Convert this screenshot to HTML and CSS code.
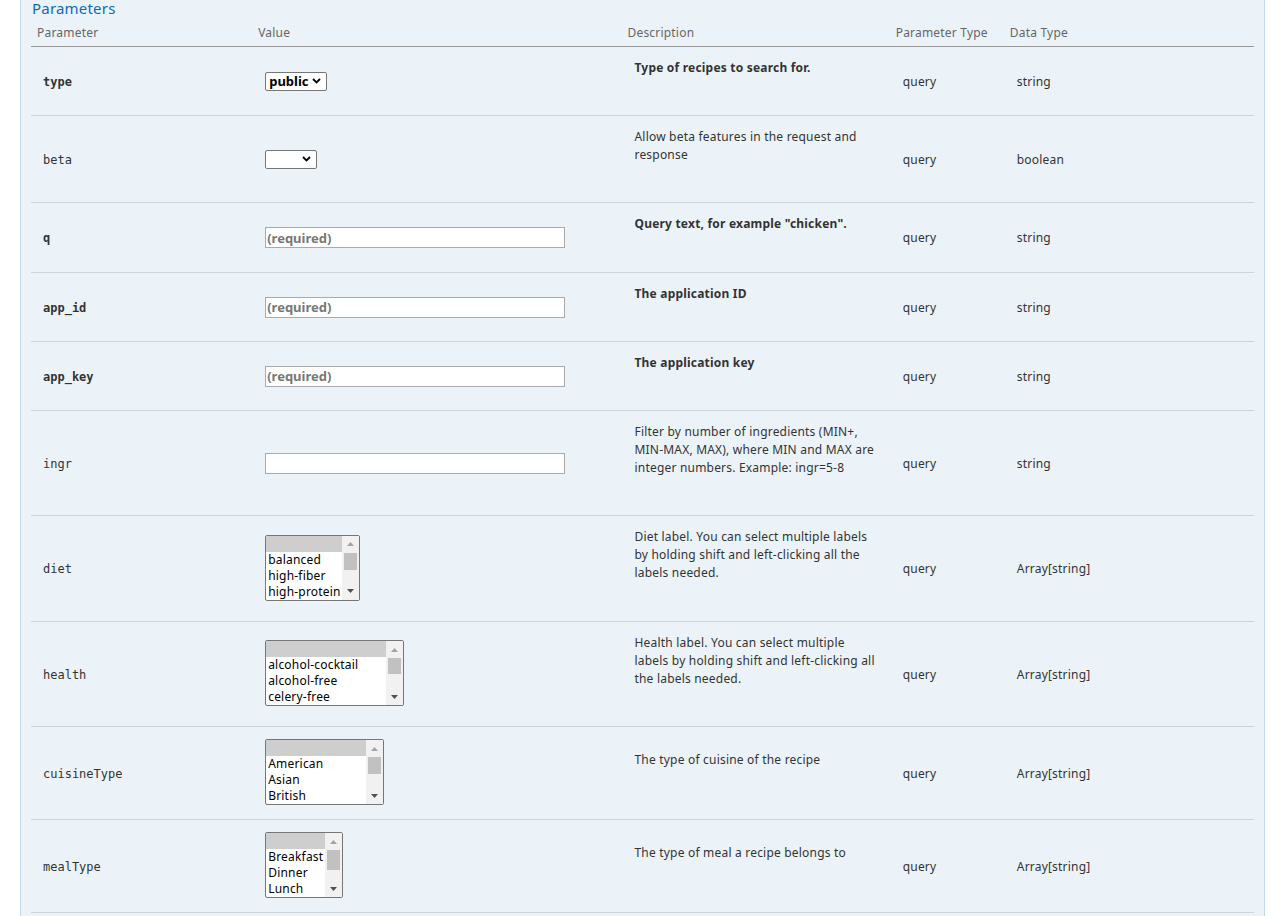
FILE: index.html
```html
<!DOCTYPE html>
<html lang="en">
<head>
  <meta charset="UTF-8">
  <title>Recipe Search - Parameters</title>
  <link rel="stylesheet" href="styles.css">
</head>
<body>
  <div class="operation-content">
    <h4 class="section-title">Parameters</h4>
    <table class="params">
      <colgroup>
        <col class="col-param">
        <col class="col-value">
        <col class="col-desc">
        <col class="col-ptype">
        <col class="col-dtype">
      </colgroup>
      <thead>
        <tr>
          <th>Parameter</th>
          <th>Value</th>
          <th>Description</th>
          <th>Parameter Type</th>
          <th>Data Type</th>
        </tr>
      </thead>
      <tbody>
        <tr>
          <td class="code required">type</td>
          <td class="value">
            <select class="select-single select-type">
              <option selected>public</option>
              <option>user</option>
              <option>any</option>
            </select>
          </td>
          <td class="desc required"><p>Type of recipes to search for.</p></td>
          <td class="cell">query</td>
          <td class="cell">string</td>
        </tr>
        <tr>
          <td class="code">beta</td>
          <td class="value">
            <select class="select-single select-bool">
              <option selected></option>
              <option>true</option>
              <option>false</option>
            </select>
          </td>
          <td class="desc"><p>Allow beta features in the request and response</p></td>
          <td class="cell">query</td>
          <td class="cell">boolean</td>
        </tr>
        <tr class="row-tall">
          <td class="code required">q</td>
          <td class="value"><input class="text-input required" type="text" placeholder="(required)"></td>
          <td class="desc required"><p>Query text, for example "chicken".</p></td>
          <td class="cell">query</td>
          <td class="cell">string</td>
        </tr>
        <tr>
          <td class="code required">app_id</td>
          <td class="value"><input class="text-input required" type="text" placeholder="(required)"></td>
          <td class="desc required"><p>The application ID</p></td>
          <td class="cell">query</td>
          <td class="cell">string</td>
        </tr>
        <tr>
          <td class="code required">app_key</td>
          <td class="value"><input class="text-input required" type="text" placeholder="(required)"></td>
          <td class="desc required"><p>The application key</p></td>
          <td class="cell">query</td>
          <td class="cell">string</td>
        </tr>
        <tr>
          <td class="code">ingr</td>
          <td class="value"><input class="text-input" type="text"></td>
          <td class="desc"><p>Filter by number of ingredients (MIN+, MIN-MAX, MAX), where MIN and MAX are integer numbers. Example: ingr=5-8</p></td>
          <td class="cell">query</td>
          <td class="cell">string</td>
        </tr>
        <tr class="row-tall">
          <td class="code">diet</td>
          <td class="value">
            <div class="listbox list-diet">
              <div class="listbox-options">
                <div class="listbox-option selected"></div>
                <div class="listbox-option">balanced</div>
                <div class="listbox-option">high-fiber</div>
                <div class="listbox-option">high-protein</div>
              </div>
              <div class="listbox-scroll">
                <div class="scroll-btn"><svg width="7" height="4" viewBox="0 0 7 4"><path d="M0 4 L3.5 0 L7 4 Z" fill="#a3a3a3"/></svg></div>
                <div class="scroll-track"><div class="scroll-thumb" style="height: 17px"></div></div>
                <div class="scroll-btn"><svg width="7" height="4" viewBox="0 0 7 4"><path d="M0 0 L3.5 4 L7 0 Z" fill="#505050"/></svg></div>
              </div>
            </div>
          </td>
          <td class="desc"><p>Diet label. You can select multiple labels by holding shift and left-clicking all the labels needed.</p></td>
          <td class="cell">query</td>
          <td class="cell">Array[string]</td>
        </tr>
        <tr>
          <td class="code">health</td>
          <td class="value">
            <div class="listbox list-health">
              <div class="listbox-options">
                <div class="listbox-option selected"></div>
                <div class="listbox-option">alcohol-cocktail</div>
                <div class="listbox-option">alcohol-free</div>
                <div class="listbox-option">celery-free</div>
              </div>
              <div class="listbox-scroll">
                <div class="scroll-btn"><svg width="7" height="4" viewBox="0 0 7 4"><path d="M0 4 L3.5 0 L7 4 Z" fill="#a3a3a3"/></svg></div>
                <div class="scroll-track"><div class="scroll-thumb" style="height: 16px"></div></div>
                <div class="scroll-btn"><svg width="7" height="4" viewBox="0 0 7 4"><path d="M0 0 L3.5 4 L7 0 Z" fill="#505050"/></svg></div>
              </div>
            </div>
          </td>
          <td class="desc"><p>Health label. You can select multiple labels by holding shift and left-clicking all the labels needed.</p></td>
          <td class="cell">query</td>
          <td class="cell">Array[string]</td>
        </tr>
        <tr>
          <td class="code">cuisineType</td>
          <td class="value">
            <div class="listbox list-cuisine">
              <div class="listbox-options">
                <div class="listbox-option selected"></div>
                <div class="listbox-option">American</div>
                <div class="listbox-option">Asian</div>
                <div class="listbox-option">British</div>
              </div>
              <div class="listbox-scroll">
                <div class="scroll-btn"><svg width="7" height="4" viewBox="0 0 7 4"><path d="M0 4 L3.5 0 L7 4 Z" fill="#a3a3a3"/></svg></div>
                <div class="scroll-track"><div class="scroll-thumb" style="height: 17px"></div></div>
                <div class="scroll-btn"><svg width="7" height="4" viewBox="0 0 7 4"><path d="M0 0 L3.5 4 L7 0 Z" fill="#505050"/></svg></div>
              </div>
            </div>
          </td>
          <td class="desc"><p>The type of cuisine of the recipe</p></td>
          <td class="cell">query</td>
          <td class="cell">Array[string]</td>
        </tr>
        <tr>
          <td class="code">mealType</td>
          <td class="value">
            <div class="listbox list-meal">
              <div class="listbox-options">
                <div class="listbox-option selected"></div>
                <div class="listbox-option">Breakfast</div>
                <div class="listbox-option">Dinner</div>
                <div class="listbox-option">Lunch</div>
              </div>
              <div class="listbox-scroll">
                <div class="scroll-btn"><svg width="7" height="4" viewBox="0 0 7 4"><path d="M0 4 L3.5 0 L7 4 Z" fill="#a3a3a3"/></svg></div>
                <div class="scroll-track"><div class="scroll-thumb" style="height: 20px"></div></div>
                <div class="scroll-btn"><svg width="7" height="4" viewBox="0 0 7 4"><path d="M0 0 L3.5 4 L7 0 Z" fill="#505050"/></svg></div>
              </div>
            </div>
          </td>
          <td class="desc"><p>The type of meal a recipe belongs to</p></td>
          <td class="cell">query</td>
          <td class="cell">Array[string]</td>
        </tr>
      </tbody>
    </table>
  </div>
</body>
</html>
```

FILE: styles.css
```css
* {
  box-sizing: border-box;
}

body {
  margin: 0;
  background-color: #ffffff;
  font-family: "Noto Sans", "Open Sans", sans-serif;
  letter-spacing: 0.2px;
  color: #333333;
  overflow: hidden;
}

.operation-content {
  margin-left: 20px;
  width: 1245px;
  background-color: #ebf3f9;
  border-left: 1px solid #c3d9ec;
  border-right: 1px solid #c3d9ec;
  padding: 0 10px 40px 10px;
}

.section-title {
  margin: 0;
  padding-left: 1px;
  font-size: 15px;
  line-height: 16px;
  font-weight: normal;
  color: #0f6ab4;
}

.params {
  width: 100%;
  table-layout: fixed;
  border-collapse: collapse;
}

.col-param { width: 221px; }
.col-value { width: 369px; }
.col-desc { width: 268px; }
.col-ptype { width: 114px; }
.col-dtype { width: 250px; }

.params th {
  padding: 9px 6px 5px 6px;
  font-size: 12px;
  line-height: 16px;
  font-weight: normal;
  text-align: left;
  color: #666666;
  border-bottom: 1px solid #999999;
}

.params td {
  font-size: 12px;
  line-height: 18px;
  vertical-align: middle;
  border-bottom: 1px solid #cfd3d6;
}

.params td.code {
  padding: 1px 12px 0 12px;
  font-family: "DejaVu Sans Mono", monospace;
  font-size: 12px;
  letter-spacing: 0;
  color: #333333;
}

.params td.required {
  font-weight: bold;
}

.params td.value {
  padding: 13px 13px;
}

.params td.desc {
  padding: 12px 13px 10px 13px;
}

.params .row-tall td.desc {
  padding-bottom: 11px;
}

.params td.desc p {
  margin: 0 0 28px 0;
}

.params td.cell {
  padding: 1px 13px 0 13px;
}

/* single dropdowns */
.select-single {
  display: block;
  height: 19px;
  padding: 0 16px 0 3px;
  -webkit-appearance: none;
  appearance: none;
  font-family: "Noto Sans", sans-serif;
  font-size: 13px;
  line-height: 17px;
  font-weight: bold;
  letter-spacing: 0;
  color: #000000;
  background-color: #ffffff;
  background-image: url("data:image/svg+xml,%3Csvg xmlns='http://www.w3.org/2000/svg' width='9' height='6' viewBox='0 0 9 6'%3E%3Cpath d='M1 1 L4.5 4.5 L8 1' fill='none' stroke='%23000' stroke-width='1.8'/%3E%3C/svg%3E");
  background-repeat: no-repeat;
  background-position: right 5px center;
  border: 1px solid #767676;
  border-radius: 2px;
}

.select-type {
  width: 62px;
}

.select-bool {
  width: 52px;
}

/* multi-select list boxes */
.listbox {
  display: flex;
  height: 66px;
  margin: -1px 0 1px 0;
  border: 1px solid #767676;
  border-radius: 2px;
  background-color: #ffffff;
  overflow: hidden;
}

.listbox-options {
  flex: 1;
  min-width: 0;
  font-size: 12px;
  line-height: 15px;
  color: #000000;
}

.listbox-option {
  height: 16px;
  padding: 0 2px;
  white-space: nowrap;
  overflow: hidden;
}

.listbox-option.selected {
  background-color: #cecece;
}

.listbox-scroll {
  width: 17px;
  display: flex;
  flex-direction: column;
  background-color: #f1f1f1;
}

.scroll-btn {
  height: 17px;
  display: flex;
  align-items: center;
  justify-content: center;
}

.scroll-track {
  flex: 1;
  padding: 0 2px;
}

.scroll-thumb {
  background-color: #c1c1c1;
}

.list-diet { width: 95px; }
.list-health { width: 139px; }
.list-cuisine { width: 119px; }
.list-meal { width: 78px; }

.text-input {
  display: block;
  width: 300px;
  height: 21px;
  padding: 0 1px;
  font-family: "Noto Sans", sans-serif;
  font-size: 13px;
  letter-spacing: 0;
  border: 1px solid #aaaaaa;
  background-color: #ffffff;
}

.text-input.required {
  font-weight: bold;
}

.text-input::placeholder {
  color: #777777;
  font-weight: bold;
}
```
